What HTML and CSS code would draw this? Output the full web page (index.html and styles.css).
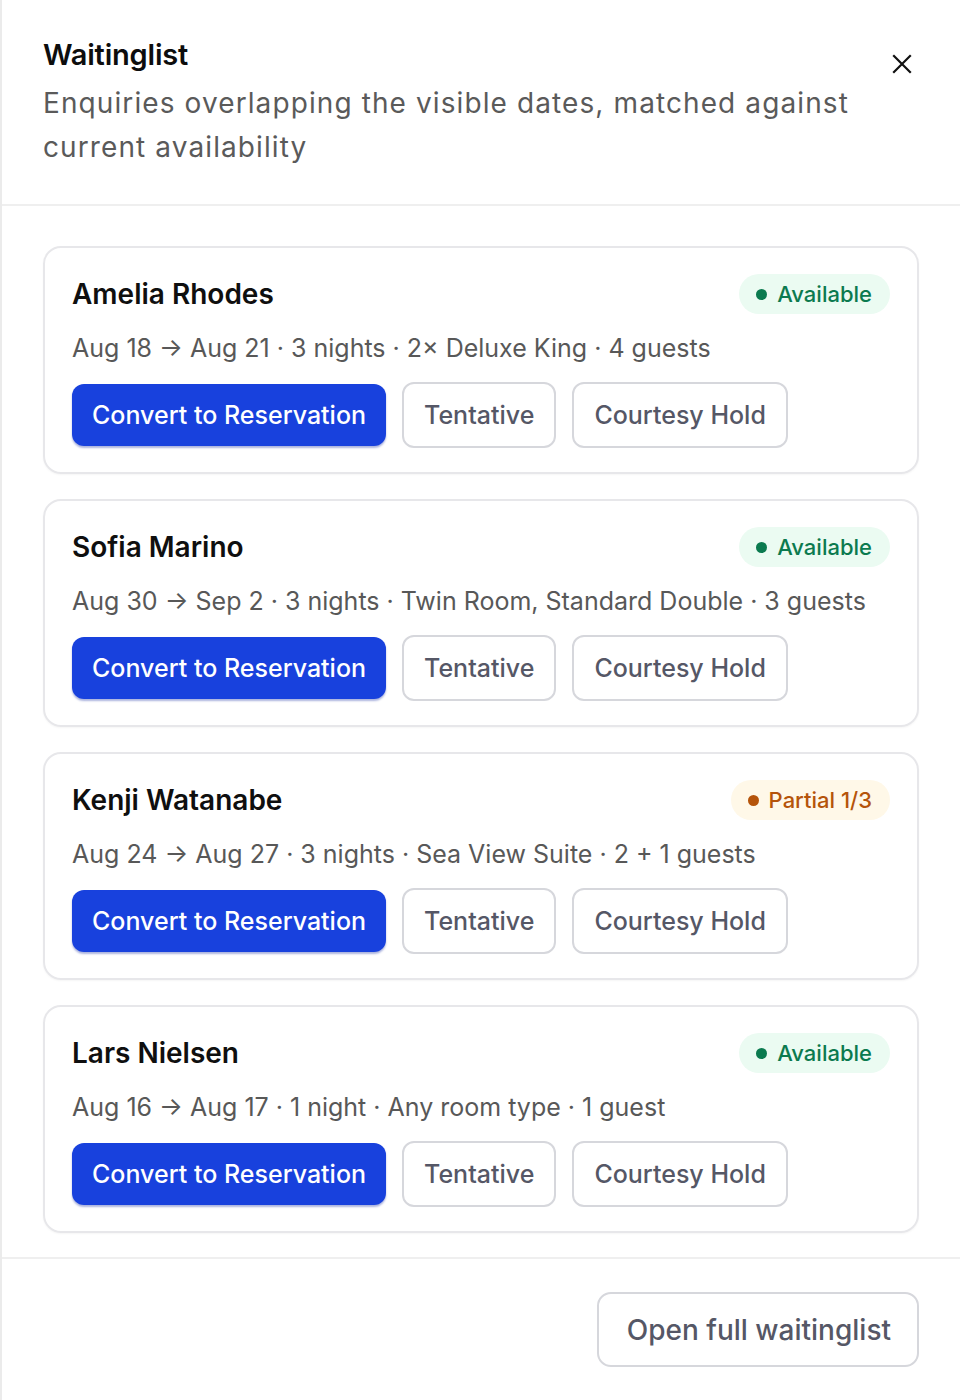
FILE: index.html
```html
<!DOCTYPE html>
<html lang="en">
<head>
<meta charset="utf-8">
<title>Waitinglist</title>
<link rel="stylesheet" href="styles.css">
</head>
<body>
<aside class="panel">
  <header class="panel-header">
    <div class="header-text">
      <h1 class="title">Waitinglist</h1>
      <p class="subtitle">Enquiries overlapping the visible dates, matched against current availability</p>
    </div>
    <button class="close" aria-label="Close">
      <svg width="20" height="20" viewBox="0 0 20 20" fill="none" stroke="#111" stroke-width="2.2" stroke-linecap="square"><path d="M2 2L18 18M18 2L2 18"/></svg>
    </button>
  </header>

  <div class="list">
    <article class="card">
      <div class="card-head">
        <h2 class="name">Amelia Rhodes</h2>
        <span class="badge badge-ok"><span class="dot"></span>Available</span>
      </div>
      <p class="meta">Aug 18 → Aug 21 · 3 nights · 2× Deluxe King · 4 guests</p>
      <div class="actions">
        <button class="btn btn-primary">Convert to Reservation</button>
        <button class="btn btn-outline">Tentative</button>
        <button class="btn btn-outline">Courtesy Hold</button>
      </div>
    </article>

    <article class="card">
      <div class="card-head">
        <h2 class="name">Sofia Marino</h2>
        <span class="badge badge-ok"><span class="dot"></span>Available</span>
      </div>
      <p class="meta">Aug 30 → Sep 2 · 3 nights · Twin Room, Standard Double · 3 guests</p>
      <div class="actions">
        <button class="btn btn-primary">Convert to Reservation</button>
        <button class="btn btn-outline">Tentative</button>
        <button class="btn btn-outline">Courtesy Hold</button>
      </div>
    </article>

    <article class="card">
      <div class="card-head">
        <h2 class="name">Kenji Watanabe</h2>
        <span class="badge badge-partial"><span class="dot"></span>Partial 1/3</span>
      </div>
      <p class="meta">Aug 24 → Aug 27 · 3 nights · Sea View Suite · 2 + 1 guests</p>
      <div class="actions">
        <button class="btn btn-primary">Convert to Reservation</button>
        <button class="btn btn-outline">Tentative</button>
        <button class="btn btn-outline">Courtesy Hold</button>
      </div>
    </article>

    <article class="card">
      <div class="card-head">
        <h2 class="name">Lars Nielsen</h2>
        <span class="badge badge-ok"><span class="dot"></span>Available</span>
      </div>
      <p class="meta">Aug 16 → Aug 17 · 1 night · Any room type · 1 guest</p>
      <div class="actions">
        <button class="btn btn-primary">Convert to Reservation</button>
        <button class="btn btn-outline">Tentative</button>
        <button class="btn btn-outline">Courtesy Hold</button>
      </div>
    </article>
  </div>

  <footer class="panel-footer">
    <button class="btn-footer">Open full waitinglist</button>
  </footer>
</aside>
</body>
</html>
```

FILE: styles.css
```css
* { box-sizing: border-box; }

html, body {
  margin: 0;
  padding: 0;
  background: #ffffff;
}

body {
  font-family: "Inter", "Liberation Sans", sans-serif;
  color: #111111;
}

.panel {
  border-left: 2px solid #ebebeb;
  min-height: 1400px;
  display: flex;
  flex-direction: column;
}

.panel-header {
  display: flex;
  align-items: flex-start;
  justify-content: space-between;
  padding: 36px 48px 35px 41px;
  border-bottom: 2px solid #efefef;
}

.header-text {
  flex: 1;
  max-width: 830px;
}

.title {
  margin: 0 0 7px 0;
  font-size: 29px;
  font-weight: 600;
  line-height: 38px;
  letter-spacing: -0.2px;
  color: #0d0d0d;
}

.subtitle {
  margin: 0;
  font-size: 28px;
  line-height: 44px;
  font-weight: 400;
  color: #5a5a5a;
  letter-spacing: 1.1px;
}

.close {
  border: 0;
  background: none;
  padding: 0;
  margin-top: 18px;
  width: 20px;
  height: 20px;
  display: flex;
}

.list {
  display: flex;
  flex-direction: column;
  gap: 25px;
  padding: 40px 41px 24px 41px;
  border-bottom: 2px solid #efefef;
}

.card {
  border: 2px solid #e7e7ea;
  border-radius: 18px;
  padding: 26px 27px 24px 27px;
  box-shadow: 0 1px 2px rgba(0,0,0,0.04);
}

.card-head {
  display: flex;
  align-items: center;
  justify-content: space-between;
  height: 40px;
}

.name {
  margin: 0;
  font-size: 28px;
  font-weight: 600;
  color: #0f0f0f;
}

.badge {
  display: inline-flex;
  align-items: center;
  gap: 10px;
  height: 40px;
  padding: 0 18px 0 17px;
  border-radius: 20px;
  font-size: 22px;
  font-weight: 500;
}

.badge .dot {
  width: 11px;
  height: 11px;
  border-radius: 50%;
  background: currentColor;
}

.badge-ok {
  background: #ebfbf2;
  color: #0b7a4f;
}

.badge-partial {
  background: #fff8e8;
  color: #b5540a;
}

.meta {
  margin: 16px 0 16px 0;
  font-size: 25px;
  line-height: 36px;
  color: #585858;
  letter-spacing: 0;
}

.actions {
  display: flex;
  align-items: center;
  gap: 16px;
}

.btn {
  font-family: inherit;
  font-size: 25px;
  line-height: 1;
  border-radius: 12px;
  cursor: pointer;
  letter-spacing: 0;
}

.btn-primary {
  height: 62px;
  padding: 0 20px;
  background: #1841dd;
  color: #ffffff;
  border: 0;
  font-weight: 500;
  box-shadow: 0 2px 2px rgba(16, 40, 160, 0.35);
}

.btn-outline {
  height: 66px;
  padding: 0 20px;
  background: #ffffff;
  color: #555766;
  border: 2px solid #d6d7dc;
  font-weight: 500;
}

.panel-footer {
  flex: 1;
  display: flex;
  justify-content: flex-end;
  align-items: flex-start;
  padding: 33px 41px;
}

.btn-footer {
  font-family: inherit;
  height: 75px;
  padding: 0 26px 0 28px;
  background: #ffffff;
  border: 2px solid #d6d7dc;
  border-radius: 14px;
  font-size: 28px;
  font-weight: 500;
  color: #555766;
}
```
